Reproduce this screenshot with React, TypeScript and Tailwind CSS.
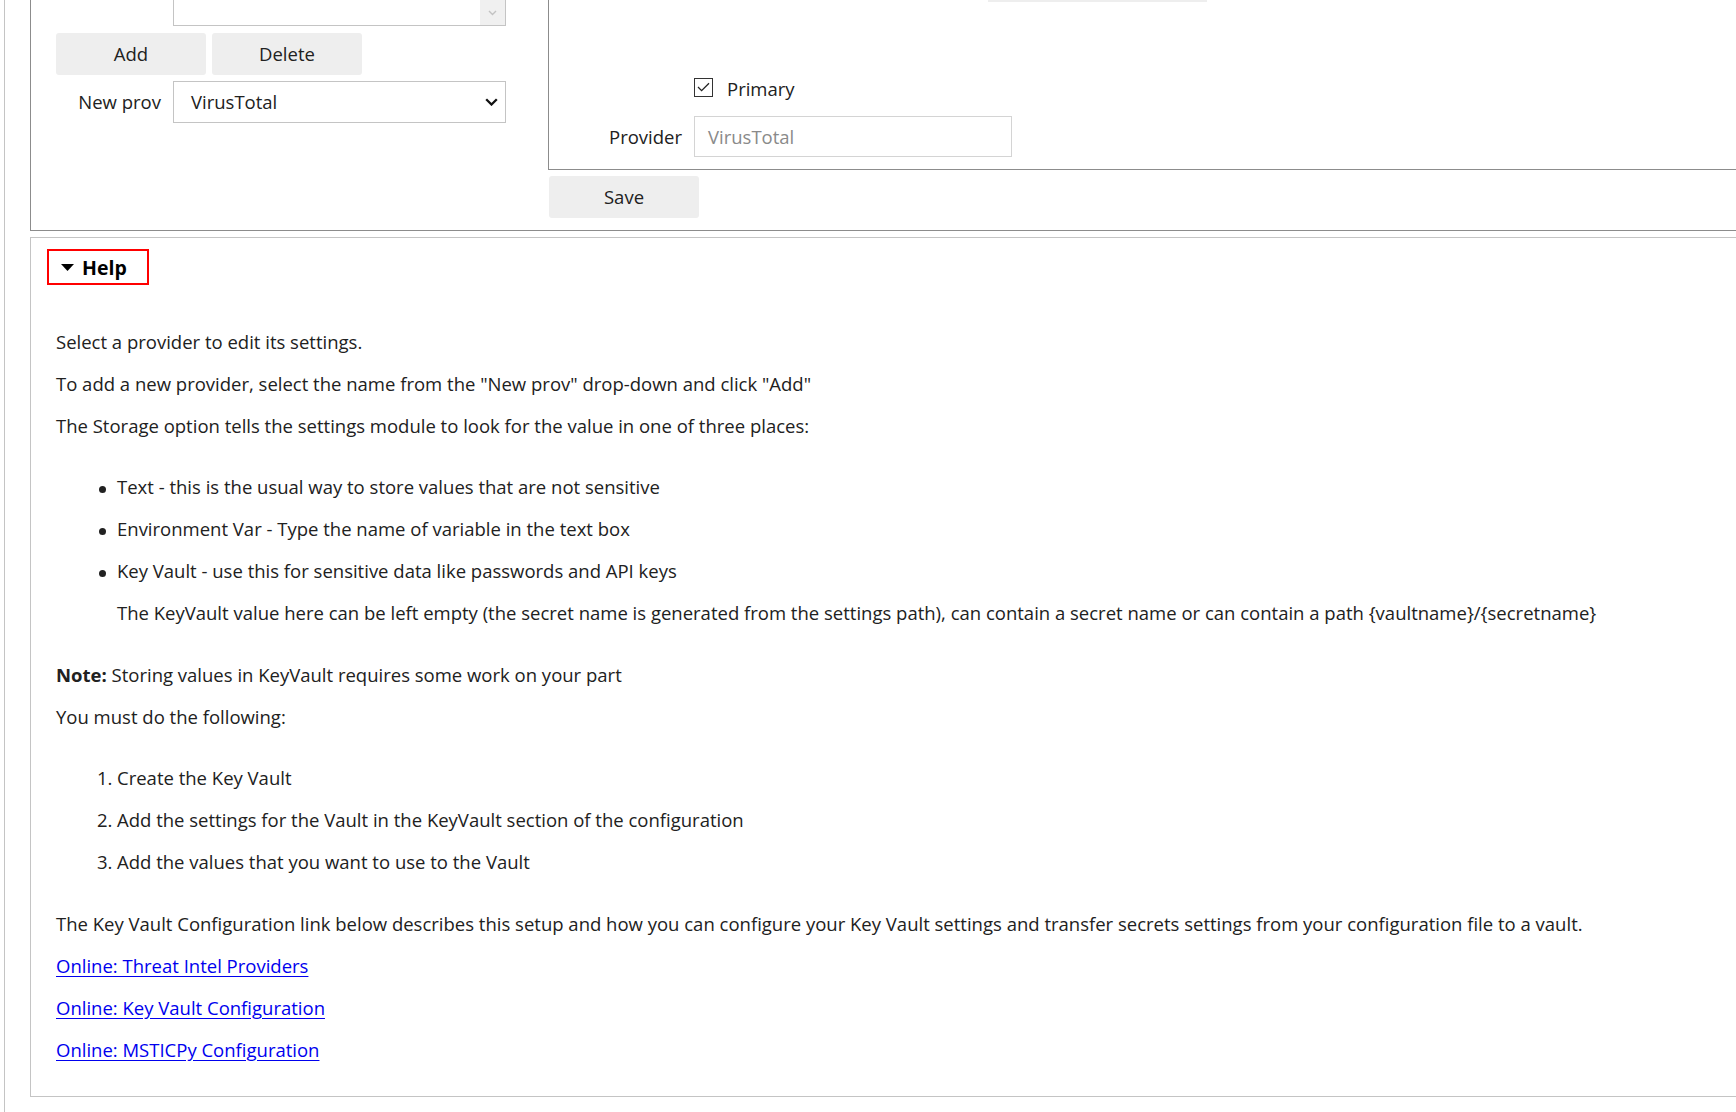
const BTN =
  'h-[42px] w-[150px] shrink-0 rounded-[3px] bg-[#eeeeee] text-[#212121] flex items-center justify-center';

const STORAGE = [
  'Text - this is the usual way to store values that are not sensitive',
  'Environment Var - Type the name of variable in the text box',
  'Key Vault - use this for sensitive data like passwords and API keys',
];

const STEPS = [
  'Create the Key Vault',
  'Add the settings for the Vault in the KeyVault section of the configuration',
  'Add the values that you want to use to the Vault',
];

const LINKS = [
  'Online: Threat Intel Providers',
  'Online: Key Vault Configuration',
  'Online: MSTICPy Configuration',
];

function DropChevron() {
  return (
    <svg width="13" height="8" viewBox="0 0 13 8">
      <path d="M1.2 1.2l5.3 5.3 5.3-5.3" fill="none" stroke="#111" strokeWidth="2.3" />
    </svg>
  );
}

export default function App() {
  return (
    <div className="w-[1736px] h-[1112px] overflow-hidden bg-white pl-[4px] text-[18.5px] text-[#212121] font-['Open_Sans','Noto_Sans',sans-serif]">
      <div className="h-full border-l border-[#c4c4c4] pl-[25px]">
        {/* provider settings */}
        <div className="h-[231px] flex border-l border-b border-[#8c8c8c]">
          <div className="w-[517px] shrink-0">
            {/* provider list (scrolled) */}
            <div className="ml-[142px] w-[333px] h-[26px] border-x border-b border-[#c4c4c4] flex justify-end">
              <div className="w-[25px] h-full bg-[#f0f0f0] flex items-center justify-center">
                <svg width="9" height="6" viewBox="0 0 9 6">
                  <path d="M1 1l3.5 3.5L8 1" fill="none" stroke="#c2c2c2" strokeWidth="1.4" />
                </svg>
              </div>
            </div>
            <div className="mt-[7px] ml-[25px] flex gap-[6px]">
              <button className={BTN}>Add</button>
              <button className={BTN}>Delete</button>
            </div>
            <div className="mt-[6px] flex items-center">
              <span className="w-[130px] text-right">New prov</span>
              <div className="ml-[12px] w-[333px] h-[42px] border border-[#c4c4c4] pl-[17px] pr-[7px] flex items-center justify-between">
                <span>VirusTotal</span>
                <DropChevron />
              </div>
            </div>
          </div>

          <div className="flex-1">
            <div className="h-[170px] border-l border-b border-[#8c8c8c]">
              <div className="ml-[439px] w-[219px] h-[2px] bg-[#eeeeee]" />
              <div className="mt-[71px] h-[28px] ml-[145px] flex items-center">
                <span className="w-[19px] h-[19px] border border-[#333] bg-white flex items-center justify-center">
                  <svg width="13" height="10" viewBox="0 0 13 10">
                    <path d="M1 5l3.6 3.6L12 1.2" fill="none" stroke="#222" strokeWidth="1.3" />
                  </svg>
                </span>
                <span className="ml-[14px] translate-y-[2px]">Primary</span>
              </div>
              <div className="mt-[15px] flex items-center">
                <span className="w-[133px] text-right">Provider</span>
                <div className="ml-[12px] w-[318px] h-[41px] border border-[#d4d4d4] pl-[13px] flex items-center text-[#8a8a8a]">
                  VirusTotal
                </div>
              </div>
            </div>
            <button className={`${BTN} mt-[6px] ml-px`}>Save</button>
          </div>
        </div>

        {/* help section */}
        <div className="mt-[6px] h-[860px] border-l border-t border-b border-[#c4c4c4] pt-[11px] pl-[16px]">
          <div className="w-[102px] h-[36px] border-2 border-[#ff0000] pl-[12px] flex items-center">
            <svg width="13" height="7" viewBox="0 0 13 7">
              <path d="M0 0h13L6.5 7z" fill="#000" />
            </svg>
            <span className="ml-[8px] text-[19.5px] font-bold text-black translate-y-[1px]">Help</span>
          </div>

          <div className="mt-[36px] ml-[9px] leading-[42px]">
            <p>Select a provider to edit its settings.</p>
            <p>To add a new provider, select the name from the "New prov" drop-down and click "Add"</p>
            <p>The Storage option tells the settings module to look for the value in one of three places:</p>

            <ul className="mt-[19px] pl-[43px]">
              {STORAGE.map((s) => (
                <li key={s} className="flex items-center">
                  <span className="w-[7px] h-[7px] shrink-0 rounded-full bg-[#212121] translate-y-[2px]" />
                  <span className="ml-[11px]">{s}</span>
                </li>
              ))}
            </ul>
            <p className="pl-[61px]">
              The KeyVault value here can be left empty (the secret name is generated from the settings path), can contain a secret name or can contain a path {'{vaultname}/{secretname}'}
            </p>

            <p className="mt-[20px]">
              <b className="font-bold">Note:</b> Storing values in KeyVault requires some work on your part
            </p>
            <p>You must do the following:</p>

            <ol className="mt-[19px] pl-[41px]">
              {STEPS.map((s, i) => (
                <li key={s} className="flex">
                  <span className="w-[20px] shrink-0">{i + 1}.</span>
                  <span>{s}</span>
                </li>
              ))}
            </ol>

            <p className="mt-[20px]">
              The Key Vault Configuration link below describes this setup and how you can configure your Key Vault settings and transfer secrets settings from your configuration file to a vault.
            </p>
            {LINKS.map((l) => (
              <p key={l}>
                <a href="#" className="text-[#0000ee] underline underline-offset-[3px]">{l}</a>
              </p>
            ))}
          </div>
        </div>
      </div>
    </div>
  );
}
